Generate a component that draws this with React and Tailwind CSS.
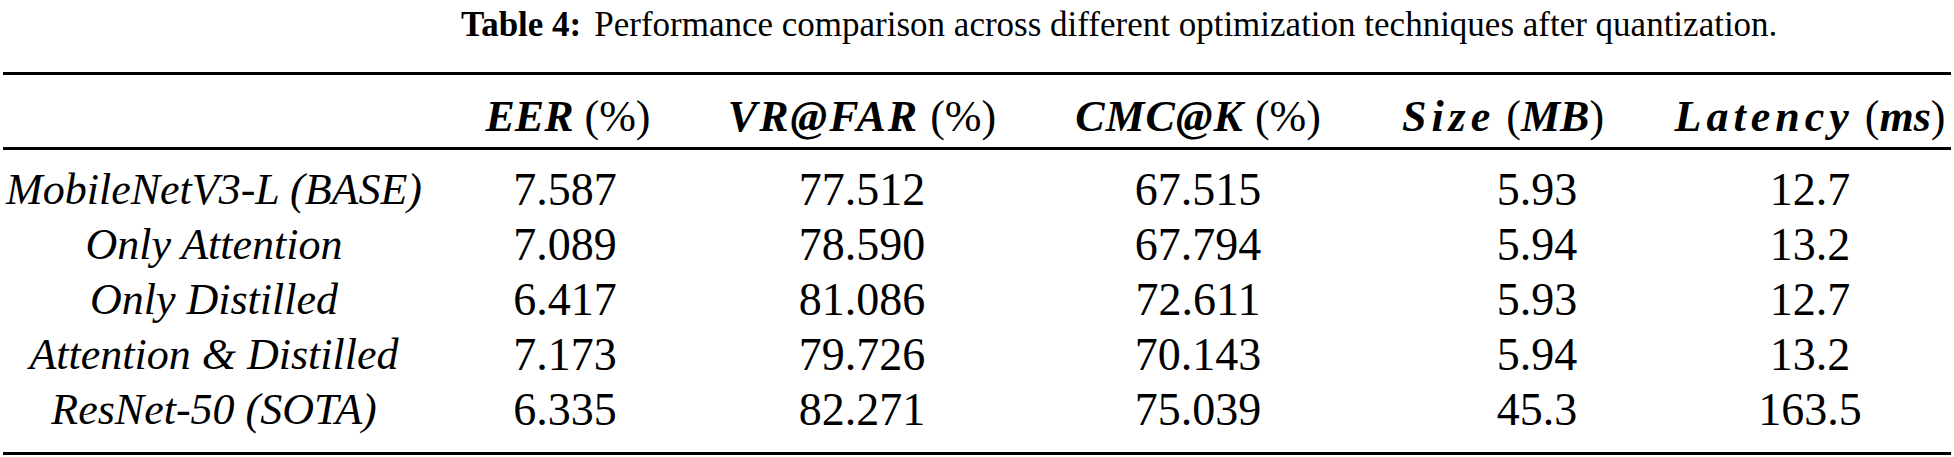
import React from 'react'

const cols = "grid grid-cols-[428px_274px_320px_352px_292px_288px] items-center text-center font-['Liberation_Serif']"

const rows = [
  ['MobileNetV3-L (BASE)', '7.587', '77.512', '67.515', '5.93', '12.7'],
  ['Only Attention', '7.089', '78.590', '67.794', '5.94', '13.2'],
  ['Only Distilled', '6.417', '81.086', '72.611', '5.93', '12.7'],
  ['Attention & Distilled', '7.173', '79.726', '70.143', '5.94', '13.2'],
  ['ResNet-50 (SOTA)', '6.335', '82.271', '75.039', '45.3', '163.5'],
]

function Rule() {
  return <div className="mx-[3px] h-[3px] bg-black" />
}

function B({ children, className = '' }) {
  return <span className={`font-['Liberation_Serif'] font-bold italic ${className}`}>{children}</span>
}

export default function App() {
  return (
    <div className="flex h-[457px] w-[1954px] flex-col overflow-hidden bg-white font-['Liberation_Serif'] text-black">
      <div className="flex h-[72px] items-start pl-[461px] pt-[5px] text-[35px] leading-[40px]">
        <span className="font-['Liberation_Serif'] font-bold">Table 4:</span>
        <span className="ml-[13px] font-['Liberation_Serif']">
          Performance comparison across different optimization techniques after quantization.
        </span>
      </div>
      <Rule />
      <div className={`${cols} h-[72px] pt-[12px] text-[44px] leading-[48px]`}>
        <div />
        <div className="pl-[6px]">
          <B>EER</B> (%)
        </div>
        <div>
          <B className="tracking-[2px]">VR@FAR</B> (%)
        </div>
        <div>
          <B className="tracking-[1px]">CMC@K</B> (%)
        </div>
        <div className="pr-[34px]">
          <B className="tracking-[5px]">Size</B> (<B>MB</B>)
        </div>
        <div>
          <B className="tracking-[5px]">Latency</B> (<B>ms</B>)
        </div>
      </div>
      <Rule />
      <div className="flex flex-col pb-[15px] pt-[12px] leading-[55px]">
        {rows.map((r) => (
          <div key={r[0]} className={`${cols} h-[55px]`}>
            <div className="text-[44px] italic">{r[0]}</div>
            {r.slice(1).map((v, i) => (
              <div key={i} className={i === 3 ? 'pl-[34px] text-[46px]' : 'text-[46px]'}>
                {v}
              </div>
            ))}
          </div>
        ))}
      </div>
      <Rule />
    </div>
  )
}
